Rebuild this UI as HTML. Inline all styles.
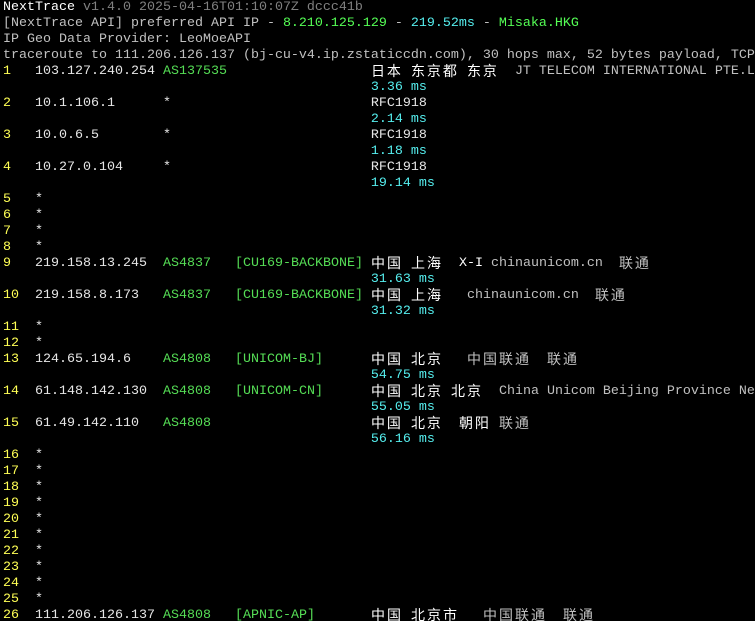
<!DOCTYPE html>
<html><head><meta charset="utf-8"><style>
html,body{margin:0;padding:0;background:#000;width:755px;height:621px;overflow:hidden}
pre{margin:0;padding:0 0 0 3px;font-family:"Liberation Mono",monospace;font-size:13.333px;line-height:16px;color:#e6e6e6;white-space:pre}
.c{font-family:"Noto Sans CJK SC",sans-serif;font-size:14px;letter-spacing:2px;color:#fff;line-height:16px;display:inline-block;height:16px;vertical-align:top;overflow:visible;position:relative;top:-1px}
.g{color:#c0c0c0}.g .c{color:#c0c0c0}
.d{color:#808080}
.w{color:#fff}
.y{color:#ffff55}
.a{color:#55dd55}
.G{color:#55ff55}
.C{color:#55eeee}
</style></head><body><pre><span class="w">NextTrace</span> <span class="d">v1.4.0 2025-04-16T01:10:07Z dccc41b</span>
<span class="g">[NextTrace API] preferred API IP - </span><span class="G">8.210.125.129</span><span class="g"> - </span><span class="C">219.52ms</span><span class="g"> - </span><span class="G">Misaka.HKG</span>
<span class="g">IP Geo Data Provider: LeoMoeAPI</span>
<span class="g">traceroute to 111.206.126.137 (bj-cu-v4.ip.zstaticcdn.com), 30 hops max, 52 bytes payload, TCP</span>
<span class="y">1</span>   103.127.240.254 <span class="a">AS137535</span>                  <span class="c">日本</span> <span class="c">东京都</span> <span class="c">东京</span>  <span class="g">JT TELECOM INTERNATIONAL PTE.L</span>
                                              <span class="C">3.36 ms</span>
<span class="y">2</span>   10.1.106.1      *                         RFC1918
                                              <span class="C">2.14 ms</span>
<span class="y">3</span>   10.0.6.5        *                         RFC1918
                                              <span class="C">1.18 ms</span>
<span class="y">4</span>   10.27.0.104     *                         RFC1918
                                              <span class="C">19.14 ms</span>
<span class="y">5</span>   *
<span class="y">6</span>   *
<span class="y">7</span>   *
<span class="y">8</span>   *
<span class="y">9</span>   219.158.13.245  <span class="a">AS4837</span>   <span class="a">[CU169-BACKBONE]</span> <span class="c">中国</span> <span class="c">上海</span>  <span class="w">X-I</span> <span class="g">chinaunicom.cn  <span class="c">联通</span></span>
                                              <span class="C">31.63 ms</span>
<span class="y">10</span>  219.158.8.173   <span class="a">AS4837</span>   <span class="a">[CU169-BACKBONE]</span> <span class="c">中国</span> <span class="c">上海</span>   <span class="g">chinaunicom.cn  <span class="c">联通</span></span>
                                              <span class="C">31.32 ms</span>
<span class="y">11</span>  *
<span class="y">12</span>  *
<span class="y">13</span>  124.65.194.6    <span class="a">AS4808</span>   <span class="a">[UNICOM-BJ]</span>      <span class="c">中国</span> <span class="c">北京</span>   <span class="g"><span class="c">中国联通</span>  <span class="c">联通</span></span>
                                              <span class="C">54.75 ms</span>
<span class="y">14</span>  61.148.142.130  <span class="a">AS4808</span>   <span class="a">[UNICOM-CN]</span>      <span class="c">中国</span> <span class="c">北京</span> <span class="c">北京</span>  <span class="g">China Unicom Beijing Province Ne</span>
                                              <span class="C">55.05 ms</span>
<span class="y">15</span>  61.49.142.110   <span class="a">AS4808</span>                    <span class="c">中国</span> <span class="c">北京</span>  <span class="c">朝阳</span> <span class="g"><span class="c">联通</span></span>
                                              <span class="C">56.16 ms</span>
<span class="y">16</span>  *
<span class="y">17</span>  *
<span class="y">18</span>  *
<span class="y">19</span>  *
<span class="y">20</span>  *
<span class="y">21</span>  *
<span class="y">22</span>  *
<span class="y">23</span>  *
<span class="y">24</span>  *
<span class="y">25</span>  *
<span class="y">26</span>  111.206.126.137 <span class="a">AS4808</span>   <span class="a">[APNIC-AP]</span>       <span class="c">中国</span> <span class="c">北京市</span>   <span class="g"><span class="c">中国联通</span>  <span class="c">联通</span></span>
</pre></body></html>
